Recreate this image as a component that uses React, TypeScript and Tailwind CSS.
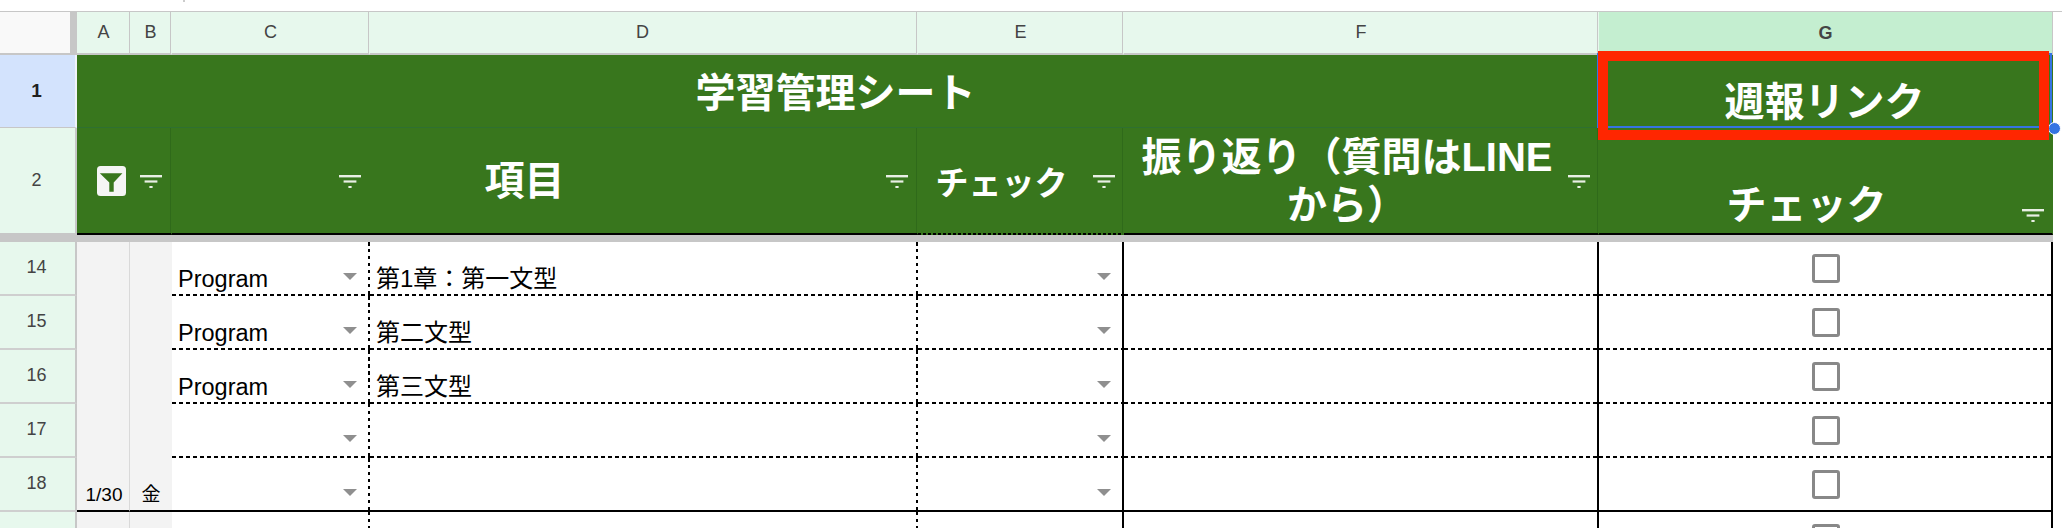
import type { ReactNode } from "react"

const GREEN = "bg-[#38761d]"
const HEAD_CELL =
  "flex items-center justify-center bg-[#e7f8ed] text-[18px] text-[#444] border-r border-b-2 border-r-[#e7f8ed] border-b-[#c7c7c7] shadow-[inset_-1px_0_0_#c7c7c7]"
const GREEN_LINE = "border-r border-r-[#38761d] shadow-[inset_-1px_0_0_#2f6a1a]"

// cell edges: [bottom, right], each dashed or solid
const EDGES = {
  dashDash:
    "bg-[repeating-linear-gradient(90deg,#000_0_4px,transparent_4px_7px),repeating-linear-gradient(180deg,#000_0_3.5px,transparent_3.5px_7px)]",
  dashSolid:
    "bg-[repeating-linear-gradient(90deg,#000_0_4px,transparent_4px_7px),linear-gradient(#000,#000)]",
  solidDash:
    "bg-[linear-gradient(#000,#000),repeating-linear-gradient(180deg,#000_0_3.5px,transparent_3.5px_7px)]",
  solidSolid: "bg-[linear-gradient(#000,#000),linear-gradient(#000,#000)]",
}
const EDGE_BASE =
  "bg-white bg-no-repeat [background-size:100%_2px,2px_100%] [background-position:left_bottom,right_top]"

const rows = [
  { n: "14", kind: "Program", title: "第1章：第一文型" },
  { n: "15", kind: "Program", title: "第二文型" },
  { n: "16", kind: "Program", title: "第三文型" },
  { n: "17", kind: "", title: "" },
  { n: "18", kind: "", title: "", last: true },
  { n: "", kind: "", title: "" }, // row 19, only its top edge is on screen
]

function FilterLines({ className }: { className: string }) {
  return (
    <svg className={className} width="22" height="13" viewBox="0 0 22 13" fill="#e9efe5">
      <rect x="0" y="0" width="22" height="2.4" />
      <rect x="4.6" y="5.4" width="12.8" height="2.2" />
      <rect x="9.4" y="11" width="3.2" height="2" />
    </svg>
  )
}

function FilterActive() {
  return (
    <svg width="29" height="30" viewBox="0 0 29 30" className="absolute left-[20px] top-[38px]">
      <rect x="0" y="0" width="29" height="30" rx="3.5" fill="#f5f5f5" />
      <path d="M2.8 7.2H25.4L16.7 16.6V25.8H12.3V16.6Z" fill="#38761d" />
    </svg>
  )
}

function Arrow() {
  return (
    <svg width="14" height="7" viewBox="0 0 14 7" className="shrink-0 mb-[16px]">
      <path d="M0 0H14L7 7Z" fill="#8f8f8f" />
    </svg>
  )
}

function BodyCell({ edges, className, children }: { edges: string; className: string; children?: ReactNode }) {
  return <div className={`${EDGE_BASE} ${edges} ${className}`}>{children}</div>
}

export default function App() {
  return (
    <div className="h-[528px] overflow-hidden bg-white font-['Liberation_Sans','Noto_Sans_CJK_JP',sans-serif]">
      <div className="h-[11px] pl-[183px]">
        <div className="w-[2px] h-[2px] bg-[#cccccc]" />
      </div>

      <div className="relative border-t border-[#c7c7c7] grid grid-cols-[77px_53px_42px_198px_548px_206px_475px_454px_1fr] grid-rows-[43px_73px_107px_7px_54px_54px_54px_54px_54px_54px]">
        {/* column letters */}
        <div className="bg-[#f9f9f9] border-r-[7px] border-b-2 border-[#c7c7c7]" />
        <div className={`${HEAD_CELL} !shadow-none !border-r-[#c7c7c7] pl-[1px]`}>A</div>
        <div className={HEAD_CELL}>B</div>
        <div className={HEAD_CELL}>C</div>
        <div className={`${HEAD_CELL} pr-[2px]`}>D</div>
        <div className={HEAD_CELL}>E</div>
        <div className={HEAD_CELL}>F</div>
        <div className="flex items-center justify-center bg-[#c4eed0] text-[18px] font-bold text-[#444] border-r border-r-[#c7c7c7]">
          G
        </div>
        <div className="bg-white" />

        {/* row 1 */}
        <div className="flex items-center justify-center pt-[1px] pr-[2px] bg-[#d3e3fd] text-[19px] font-bold text-[#1f1f1f] border-r-2 border-b border-r-[#f0f4fa] border-b-[#c7c7c7]">
          1
        </div>
        <div className={`col-span-6 ${GREEN} border-b border-[#2e7031] flex items-center justify-center pt-[3px] pr-[5px] text-[40px] font-bold text-white`}>
          学習管理シート
        </div>
        <div className={`${GREEN} flex items-end justify-center pb-[2px] pr-[3px] text-[40px] leading-[48px] font-bold text-white`}>
          週報リンク
        </div>
        <div className="bg-white" />

        {/* row 2 */}
        <div className="flex items-center justify-center pr-[2px] bg-[#e7f8ed] text-[18px] text-[#444] border-r-2 border-b-2 border-[#c7c7c7]">
          2
        </div>
        <div className={`relative col-span-2 ${GREEN} ${GREEN_LINE} border-b-2 border-b-black`}>
          <FilterActive />
          <FilterLines className="absolute right-[9px] top-[47px]" />
        </div>
        <div className={`relative col-span-2 ${GREEN} ${GREEN_LINE} border-b-2 border-b-black flex items-center justify-center pr-[40px] text-[40px] font-bold text-white`}>
          項目
          <FilterLines className="absolute left-[167px] top-[47px]" />
          <FilterLines className="absolute right-[9px] top-[47px]" />
        </div>
        <div className={`relative ${GREEN_LINE} bg-[#38761d] bg-[repeating-linear-gradient(90deg,#000_0_3px,transparent_3px_5px)] bg-[length:100%_2px] bg-bottom bg-no-repeat flex items-center justify-center pt-[4px] pr-[38px] text-[33px] font-bold text-white`}>
          チェック
          <FilterLines className="absolute right-[8px] top-[47px]" />
        </div>
        <div className={`relative ${GREEN} ${GREEN_LINE} border-b-2 border-b-black flex items-center justify-center px-[10px] pr-[38px] text-center text-[40px] leading-[48px] font-bold text-white`}>
          振り返り（質問はLINEから）
          <FilterLines className="absolute right-[8px] top-[47px]" />
        </div>
        <div className={`relative ${GREEN} border-r border-r-[#38761d] border-b-2 border-b-black flex items-end justify-center pb-[4px] pr-[38px] text-[40px] leading-[48px] font-bold text-white`}>
          チェック
          <FilterLines className="absolute right-[8px] top-[81px]" />
        </div>
        <div className="bg-white" />

        {/* freeze bar */}
        <div className="col-span-8 bg-[#c7c7c7]" />
        <div className="bg-white" />

        {/* rows 14+ : A and B are merged down to 18 */}
        {rows.map((row, i) => {
          const bottom = row.last ? "solid" : "dash"
          return (
            <div key={i} className="contents">
              <div className="flex items-center justify-center pb-[2px] pr-[2px] bg-[#e7f8ed] text-[18px] text-[#444] border-r-2 border-b-2 border-r-[#c7c7c7] border-b-[#cfcfcf]">
                {row.n}
              </div>
              {i === 0 && (
                <>
                  <div className="row-span-5 flex items-end justify-center pb-[4px] pl-[2px] bg-[#f3f3f3] text-[19px] leading-[22px] text-black border-r border-r-[#d9d9d9] border-b-2 border-b-black">
                    1/30
                  </div>
                  <div className="row-span-5 flex items-end justify-center pb-[4px] bg-[#f3f3f3] text-[19px] leading-[22px] text-black border-b-2 border-b-black">
                    金
                  </div>
                </>
              )}
              {i === 5 && (
                <>
                  <div className="bg-[#f3f3f3] border-r border-r-[#d9d9d9]" />
                  <div className="bg-[#f3f3f3]" />
                </>
              )}
              <BodyCell
                edges={bottom === "solid" ? EDGES.solidDash : EDGES.dashDash}
                className="flex items-end justify-between pl-[6px] pr-[13px]"
              >
                <span className="pb-[3px] text-[23.5px] leading-[28px] text-black">{row.kind}</span>
                <Arrow />
              </BodyCell>
              <BodyCell
                edges={bottom === "solid" ? EDGES.solidDash : EDGES.dashDash}
                className="flex items-end pl-[6px] pb-[3px] text-[24px] leading-[28px] text-black"
              >
                {row.title}
              </BodyCell>
              <BodyCell
                edges={bottom === "solid" ? EDGES.solidSolid : EDGES.dashSolid}
                className="flex items-end justify-end pr-[13px]"
              >
                <Arrow />
              </BodyCell>
              <BodyCell edges={bottom === "solid" ? EDGES.solidSolid : EDGES.dashSolid} className="" />
              <BodyCell
                edges={bottom === "solid" ? EDGES.solidSolid : EDGES.dashSolid}
                className="flex items-center justify-center pb-[2px]"
              >
                <div className="w-[28px] h-[29px] rounded-[3px] border-[3px] border-[#888888]" />
              </BodyCell>
              <div className="bg-white" />
            </div>
          )
        })}

        {/* selection and the red annotation lie over the grid */}
        <div className="absolute left-[1597px] top-[41px] w-[455px] h-[75px] border-2 border-[#3574e3]" />
        <div className="absolute left-[2048px] top-[110px] w-[13px] h-[13px] rounded-full bg-[#3574e3] border border-white" />
        <div className="absolute left-[1598px] top-[39px] w-[451px] h-[89px] border-[10px] border-[#ff2600]" />
      </div>
    </div>
  )
}
